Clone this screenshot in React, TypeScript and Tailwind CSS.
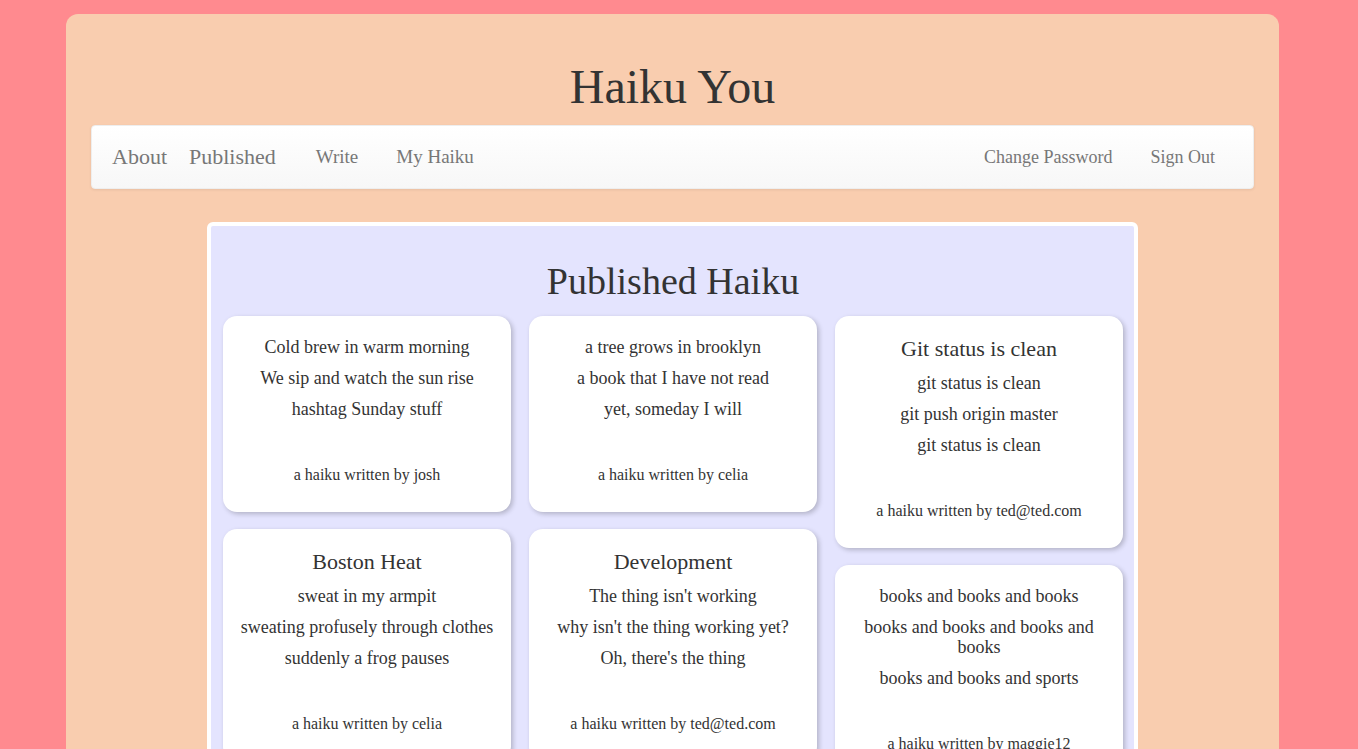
import React from "react";

type Haiku = { title?: string; lines: string[]; author: string };

const columns: Haiku[][] = [
  [
    { lines: ["Cold brew in warm morning", "We sip and watch the sun rise", "hashtag Sunday stuff"], author: "josh" },
    { title: "Boston Heat", lines: ["sweat in my armpit", "sweating profusely through clothes", "suddenly a frog pauses"], author: "celia" },
  ],
  [
    { lines: ["a tree grows in brooklyn", "a book that I have not read", "yet, someday I will"], author: "celia" },
    { title: "Development", lines: ["The thing isn't working", "why isn't the thing working yet?", "Oh, there's the thing"], author: "ted@ted.com" },
  ],
  [
    { title: "Git status is clean", lines: ["git status is clean", "git push origin master", "git status is clean"], author: "ted@ted.com" },
    { lines: ["books and books and books", "books and books and books and books", "books and books and sports"], author: "maggie12" },
  ],
];

function Card({ h }: { h: Haiku }) {
  return (
    <div className="bg-white rounded-[14px] shadow-[2px_2px_5px_rgba(0,0,0,0.22)] px-[15px] pt-[21px] pb-[28px] text-center text-[#333]">
      {h.title && <div className="text-[22px] leading-[24px] mb-[12px] text-[#333]">{h.title}</div>}
      <div className="flex flex-col gap-[11px]">
        {h.lines.map((l, i) => (
          <p key={i} className="text-[18px] leading-[20px]">{l}</p>
        ))}
      </div>
      <div className="mt-[47px] text-[16px] leading-[18px] text-[#333]">a haiku written by {h.author}</div>
    </div>
  );
}

export default function App() {
  return (
    <div
      className="min-h-screen bg-[#ff8a8f] pt-[14px] pl-[66px] overflow-hidden"
      style={{ fontFamily: '"Liberation Serif", serif' }}
    >
      <div className="w-[1213px] bg-[#f9cdaf] rounded-[12px] pt-[47px] px-[25px] pb-[60px]">
        <h1 className="text-center text-[48px] leading-[52px] text-[#333] mb-[12px]">Haiku You</h1>
        <nav className="h-[64px] rounded-[4px] border border-[#eee] bg-gradient-to-b from-white to-[#f7f7f7] shadow-[0_1px_3px_rgba(0,0,0,0.08)] flex items-center text-[#777]">
          <a className="ml-[20px] text-[22px] leading-[28px]">About</a>
          <a className="ml-[22px] text-[22px] leading-[28px]">Published</a>
          <a className="ml-[40px] text-[19px] leading-[28px]">Write</a>
          <a className="ml-[38px] text-[19px] leading-[28px]">My Haiku</a>
          <div className="flex-1" />
          <a className="text-[18px] leading-[28px]">Change Password</a>
          <a className="ml-[38px] mr-[38px] text-[18px] leading-[28px]">Sign Out</a>
        </nav>
        <div className="mt-[33px] mx-auto w-[931px] border-[4px] border-white rounded-[6px] bg-[#e4e4fe] pt-[33px] pl-[12px] pr-[11px] pb-[40px]">
          <h2 className="text-center text-[38px] leading-[44px] text-[#333] mb-[13px]">Published Haiku</h2>
          <div className="grid grid-cols-3 gap-[18px] items-start">
            {columns.map((col, ci) => (
              <div key={ci} className="flex flex-col gap-[17px]">
                {col.map((h, hi) => (
                  <Card key={hi} h={h} />
                ))}
              </div>
            ))}
          </div>
        </div>
      </div>
    </div>
  );
}
